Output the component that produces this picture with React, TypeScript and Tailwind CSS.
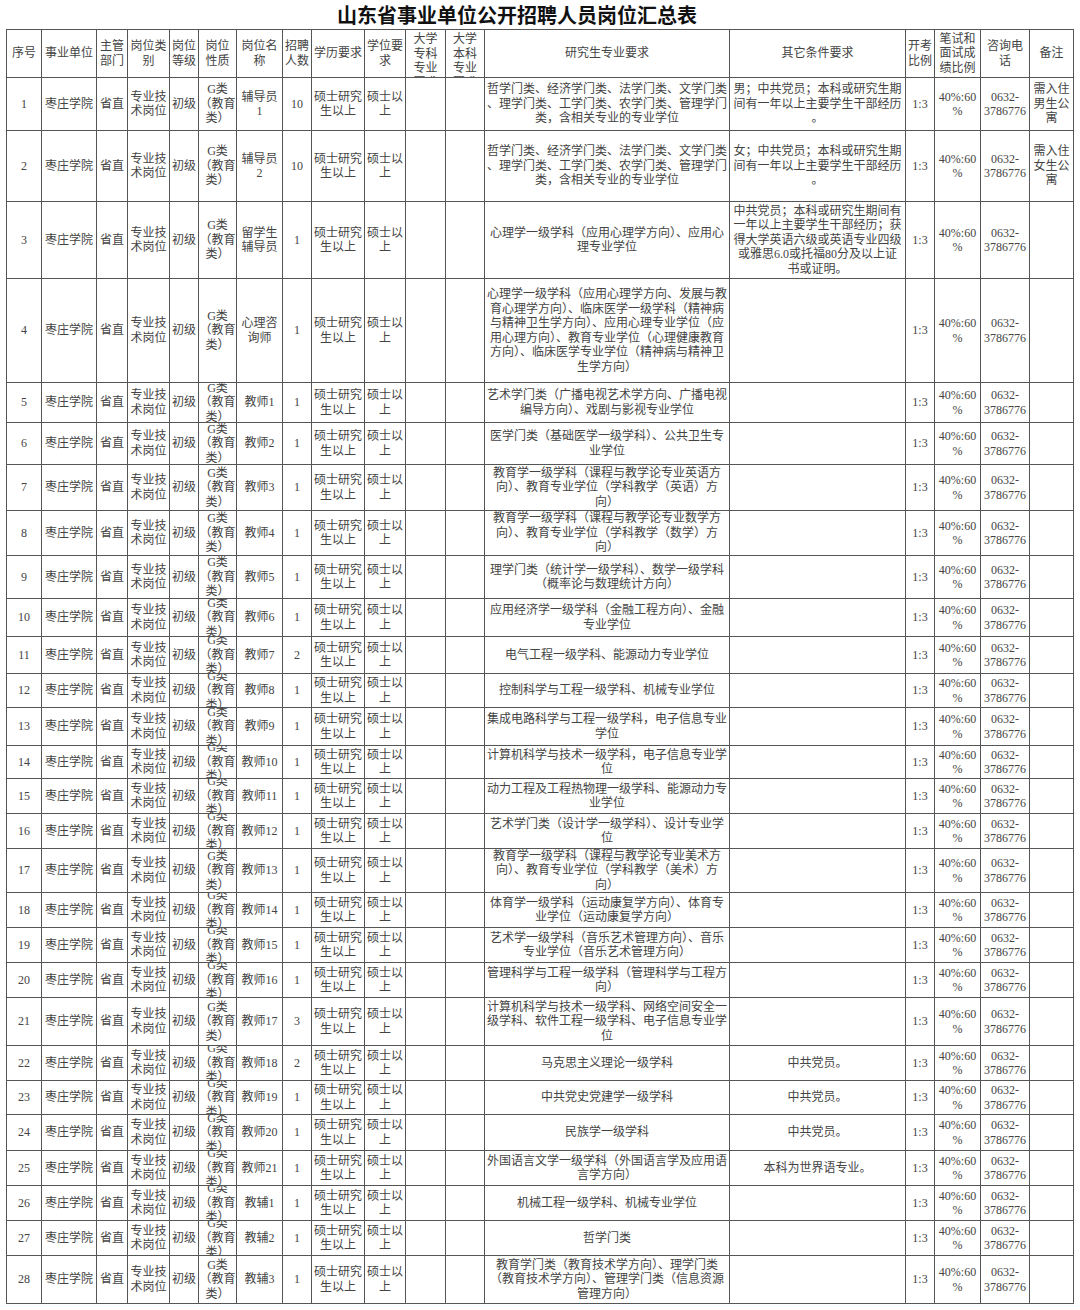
import type { ReactNode } from "react";
import clsx from "clsx";

const headers: { label: string; top?: boolean }[] = [
    { label: "序号" },
    { label: "事业单位" },
    { label: "主管\n部门" },
    { label: "岗位类\n别" },
    { label: "岗位\n等级" },
    { label: "岗位\n性质" },
    { label: "岗位名\n称" },
    { label: "招聘\n人数" },
    { label: "学历要求" },
    { label: "学位要\n求" },
    { label: "大学\n专科\n专业\n要求", top: true },
    { label: "大学\n本科\n专业\n要求", top: true },
    { label: "研究生专业要求" },
    { label: "其它条件要求" },
    { label: "开考\n比例" },
    { label: "笔试和\n面试成\n绩比例" },
    { label: "咨询电\n话" },
    { label: "备注" },
];

const names = [
    "辅导员\n1", "辅导员\n2", "留学生\n辅导员", "心理咨\n询师",
    ...Array.from({ length: 21 }, (_, i) => `教师${i + 1}`),
    "教辅1", "教辅2", "教辅3",
];

const nums = [10, 10, 1, 1, 1, 1, 1, 1, 1, 1, 2, 1, 1, 1, 1, 1, 1, 1, 1, 1, 3, 2, 1, 1, 1, 1, 1, 1];

// 研究生专业要求，按原表换行
const majors = [
    "哲学门类、经济学门类、法学门类、文学门类\n、理学门类、工学门类、农学门类、管理学门\n类，含相关专业的专业学位",
    "哲学门类、经济学门类、法学门类、文学门类\n、理学门类、工学门类、农学门类、管理学门\n类，含相关专业的专业学位",
    "心理学一级学科（应用心理学方向）、应用心\n理专业学位",
    "心理学一级学科（应用心理学方向、发展与教\n育心理学方向）、临床医学一级学科（精神病\n与精神卫生学方向）、应用心理专业学位（应\n用心理方向）、教育专业学位（心理健康教育\n方向）、临床医学专业学位（精神病与精神卫\n生学方向）",
    "艺术学门类（广播电视艺术学方向、广播电视\n编导方向）、戏剧与影视专业学位",
    "医学门类（基础医学一级学科）、公共卫生专\n业学位",
    "教育学一级学科（课程与教学论专业英语方\n向）、教育专业学位（学科教学（英语）方\n向）",
    "教育学一级学科（课程与教学论专业数学方\n向）、教育专业学位（学科教学（数学）方\n向）",
    "理学门类（统计学一级学科）、数学一级学科\n（概率论与数理统计方向）",
    "应用经济学一级学科（金融工程方向）、金融\n专业学位",
    "电气工程一级学科、能源动力专业学位",
    "控制科学与工程一级学科、机械专业学位",
    "集成电路科学与工程一级学科，电子信息专业\n学位",
    "计算机科学与技术一级学科，电子信息专业学\n位",
    "动力工程及工程热物理一级学科、能源动力专\n业学位",
    "艺术学门类（设计学一级学科）、设计专业学\n位",
    "教育学一级学科（课程与教学论专业美术方\n向）、教育专业学位（学科教学（美术）方\n向）",
    "体育学一级学科（运动康复学方向）、体育专\n业学位（运动康复学方向）",
    "艺术学一级学科（音乐艺术管理方向）、音乐\n专业学位（音乐艺术管理方向）",
    "管理科学与工程一级学科（管理科学与工程方\n向）",
    "计算机科学与技术一级学科、网络空间安全一\n级学科、软件工程一级学科、电子信息专业学\n位",
    "马克思主义理论一级学科",
    "中共党史党建学一级学科",
    "民族学一级学科",
    "外国语言文学一级学科（外国语言学及应用语\n言学方向）",
    "机械工程一级学科、机械专业学位",
    "哲学门类",
    "教育学门类（教育技术学方向）、理学门类\n（教育技术学方向）、管理学门类（信息资源\n管理方向）",
];

const others: Record<number, string> = {
    0: "男；中共党员；本科或研究生期\n间有一年以上主要学生干部经历\n。",
    1: "女；中共党员；本科或研究生期\n间有一年以上主要学生干部经历\n。",
    2: "中共党员；本科或研究生期间有\n一年以上主要学生干部经历；获\n得大学英语六级或英语专业四级\n或雅思6.0或托福80分及以上证\n书或证明。",
    21: "中共党员。",
    22: "中共党员。",
    23: "中共党员。",
    24: "本科为世界语专业。",
};

const notes: Record<number, string> = {
    0: "需入住\n男生公\n寓",
    1: "需入住\n女生公\n寓",
};

// 行高较小的行，“G类(教育类)”挤在一起
const tightRows = [9, 10, 11, 12, 13, 14, 15, 17, 18, 19, 21, 22, 23, 24, 25, 26];

function Cell({ children, className }: { children?: ReactNode; className?: string }) {
    return (
        <div
            className={clsx(
                "flex justify-center overflow-hidden border-r border-b border-[#555] text-center whitespace-pre leading-[14.5px]",
                className ?? "items-center"
            )}
        >
            {children}
        </div>
    );
}

export default function App() {
    return (
        <div className="w-[1080px] h-[1310px] bg-white font-['Liberation_Serif','Noto_Sans_CJK_SC',serif] text-[12px] text-[#444]">
            <div className="h-[29px] pr-[46px] pt-[3px] text-center text-[20px] leading-[24px] font-bold text-[#111] font-['Noto_Sans_CJK_SC',sans-serif]">
                山东省事业单位公开招聘人员岗位汇总表
            </div>
            <div className="ml-[6px] grid w-max border-l border-t border-[#555] grid-cols-[35px_55px_31px_42px_29px_38px_46px_29px_53px_41px_40px_39px_245px_176px_29px_46px_49px_44px] grid-rows-[48px_53px_71px_77px_104px_40px_42px_46px_45px_43px_38px_37px_34px_38px_33px_35px_35px_44px_35px_35px_35px_48px_35px_34px_36px_35px_35px_35px_48px]">
                {headers.map(h => (
                    <Cell key={h.label} className={h.top ? "items-start pt-[2px]" : "items-center"}>
                        {h.label}
                    </Cell>
                ))}
                {majors.map((m, i) => {
                    const tight = tightRows.includes(i);
                    return [
                        <Cell key={`${i}-0`}>{i + 1}</Cell>,
                        <Cell key={`${i}-1`}>枣庄学院</Cell>,
                        <Cell key={`${i}-2`}>省直</Cell>,
                        <Cell key={`${i}-3`}>{"专业技\n术岗位"}</Cell>,
                        <Cell key={`${i}-4`}>初级</Cell>,
                        <Cell key={`${i}-5`} className={tight ? "items-center leading-[12px]" : "items-center"}>
                            {"G类\n（教育\n类）"}
                        </Cell>,
                        <Cell key={`${i}-6`}>{names[i]}</Cell>,
                        <Cell key={`${i}-7`}>{nums[i]}</Cell>,
                        <Cell key={`${i}-8`}>{"硕士研究\n生以上"}</Cell>,
                        <Cell key={`${i}-9`}>{"硕士以\n上"}</Cell>,
                        <Cell key={`${i}-10`} />,
                        <Cell key={`${i}-11`} />,
                        <Cell key={`${i}-12`}>{m}</Cell>,
                        <Cell key={`${i}-13`}>{others[i] ?? ""}</Cell>,
                        <Cell key={`${i}-14`}>1:3</Cell>,
                        <Cell key={`${i}-15`}>{"40%:60\n%"}</Cell>,
                        <Cell key={`${i}-16`}>{"0632-\n3786776"}</Cell>,
                        <Cell key={`${i}-17`}>{notes[i] ?? ""}</Cell>,
                    ];
                })}
            </div>
        </div>
    );
}
